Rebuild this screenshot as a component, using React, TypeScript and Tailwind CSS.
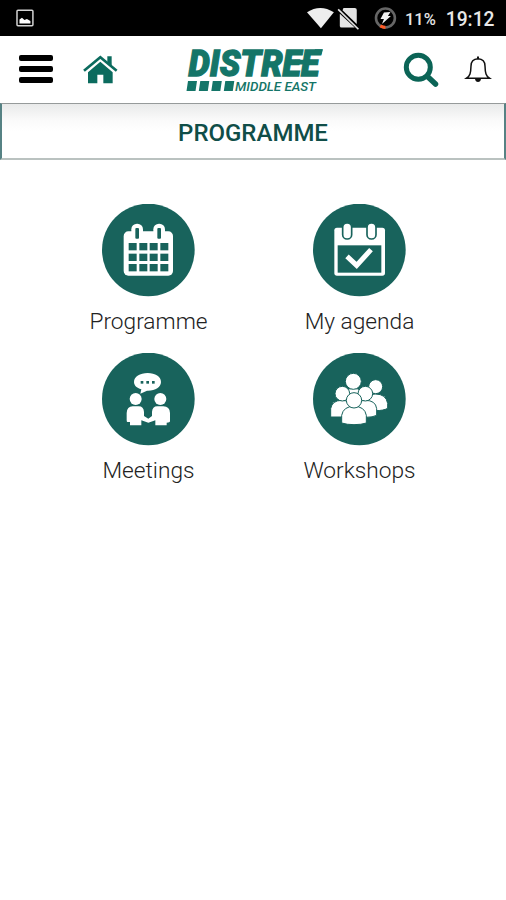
import React from "react";

const roboto = "font-[Roboto,'Liberation_Sans',sans-serif]";

function StatusBar() {
  return (
    <div className="flex h-9 items-center bg-black text-white">
      <svg className="ml-4 h-[18px] w-[18px]" viewBox="0 0 18 18">
        <rect x="1" y="1.3" width="16" height="15.4" rx="1" fill="none" stroke="#d4d4d4" strokeWidth="1.5" />
        <path d="M3.5 14.5V10.5L6 8.8L8.5 11L11 10L14.5 12V14.5Z" fill="#fff" />
      </svg>
      <svg className="ml-[273px] h-9 w-[54px]" viewBox="0 0 162 108">
        <path d="M0 37Q40 10 81 37L42 85Z" fill="#eee" />
        <path d="M110 24H144Q150 24 150 30V72L107 31Z" fill="#e4e4e4" />
        <path d="M99 41L144 83H104Q99 83 99 78Z" fill="#e4e4e4" />
        <path d="M94 28L155 88" stroke="#e4e4e4" strokeWidth="5" />
      </svg>
      <svg className="ml-[13px] h-[24px] w-[24px]" viewBox="0 0 24 24">
        <circle cx="11.5" cy="12" r="9.5" fill="none" stroke="#666" strokeWidth="2.6" />
        <path d="M11.5 21.5A9.5 9.5 0 0 1 6.4 20" fill="none" stroke="#ff5a26" strokeWidth="3.2" />
        <path d="M10 6.5L16.5 6L14 10H17L8 18L10 13H6.5Z" fill="#f2f2f2" />
      </svg>
      <svg className="h-9 w-[109px]" viewBox="0 0 109 36">
        <text x="7" y="25" textLength="31" lengthAdjust="spacingAndGlyphs" className={`${roboto} text-[17px] font-medium`} fill="#e6e6e6">11%</text>
        <text x="48" y="26" textLength="49" lengthAdjust="spacingAndGlyphs" className={`${roboto} text-[21px] font-medium`} fill="#e8e8e8">19:12</text>
      </svg>
    </div>
  );
}

function Logo() {
  return (
    <svg className="ml-[68px] h-[50px] w-[140px] overflow-visible" viewBox="0 0 140 50" fill="#147568">
      <text x="2.5" y="31" textLength="131" lengthAdjust="spacingAndGlyphs" className={`${roboto} text-[36.5px] font-black italic`} stroke="#147568" strokeWidth="1.3">DISTREE</text>
      <path d="M109 14.8H123L122 19.5H108Z" />
      <path d="M129 4.3H137L135.5 9.5H128Z" />
      <path d="M2 36H11L9.5 46H.5ZM14.3 36H23.3L21.8 46H12.8ZM26.8 36H35.8L34.3 46H25.3ZM39.3 36H48.3L46.8 46H37.8Z" />
      <text x="49" y="45.7" textLength="81" lengthAdjust="spacingAndGlyphs" className={`${roboto} text-[13.5px] font-medium italic`}>MIDDLE EAST</text>
    </svg>
  );
}

function Header() {
  return (
    <header className="flex h-[67px] items-center bg-white">
      <div className="mb-px ml-[19px] flex w-[34px] flex-col gap-[5.5px]">
        <span className="h-[5.6px] rounded-[2px] bg-black" />
        <span className="h-[5.6px] rounded-[2px] bg-black" />
        <span className="h-[5.6px] rounded-[2px] bg-black" />
      </div>
      <svg className="ml-[30px] h-[30px] w-[35px]" viewBox="249 164 105 90" fill="#0b6b5e">
        <path d="M264 216L301 184L338 216V249H310V223H292V249H264Z" />
        <path d="M322 168H335V198L322 186Z" />
        <path d="M252 211L301 171L350 211" fill="none" stroke="#0b6b5e" strokeWidth="8" />
      </svg>
      <Logo />
      <svg className="ml-[77px] h-[38px] w-[38px]" viewBox="0 0 38 38" fill="none" stroke="#0b6456">
        <circle cx="15.3" cy="16.3" r="12" strokeWidth="5" />
        <path d="M24.5 25.5L32.5 33" strokeWidth="5.5" strokeLinecap="round" />
      </svg>
      <svg className="mb-[2px] ml-[23px] h-[30px] w-[28px]" viewBox="0 0 28 30" fill="none" stroke="#111" strokeWidth="1.5">
        <path d="M2.5 24.2C6 22 6.8 19 7 12C7 7.5 9.5 5 14 4.7C18.5 5 21 7.5 21 12C21.2 19 22 22 25.5 24.2Z" />
        <path d="M14 2.5V5" strokeWidth="2" />
        <path d="M11 25H17Q16.5 28 14 28Q11.5 28 11 25Z" fill="#111" stroke="none" />
      </svg>
    </header>
  );
}

function CalendarIcon() {
  return (
    <svg className="size-[93px]" viewBox="66 27 279 279">
      <circle cx="205" cy="165" r="139" fill="#18635c" />
      <rect x="131" y="109" width="148" height="133" rx="14" fill="#fff" />
      <rect x="154" y="86" width="35" height="52" rx="17" fill="#fff" />
      <rect x="220" y="86" width="35" height="52" rx="17" fill="#fff" />
      <g fill="#18635c">
        <rect x="166" y="99" width="11" height="32" rx="3" />
        <rect x="232" y="99" width="11" height="32" rx="3" />
        {[144, 176, 207].map((y) =>
          [146, 178, 209, 241].map((x) => <rect key={`${x}-${y}`} x={x} y={y} width="24" height="22" />),
        )}
      </g>
    </svg>
  );
}

function AgendaIcon() {
  return (
    <svg className="size-[93px]" viewBox="69 27 279 279">
      <circle cx="208" cy="165" r="139" fill="#18635c" />
      <rect x="133" y="98" width="152" height="144" rx="8" fill="#fff" />
      <rect x="143" y="151" width="131" height="82" fill="#18635c" />
      <g fill="#fff" stroke="#18635c" strokeWidth="5">
        <rect x="158" y="84" width="27" height="48" rx="13" />
        <rect x="231" y="84" width="27" height="48" rx="13" />
      </g>
      <path d="M171 184L200 211L243 164" fill="none" stroke="#fff" strokeWidth="15" />
    </svg>
  );
}

function MeetingsIcon() {
  return (
    <svg className="size-[93px]" viewBox="66 24 279 279">
      <circle cx="205" cy="162" r="139" fill="#18635c" />
      <g fill="#fff">
        <path d="M203 84C226 84 243 95 243 111C243 127 225 138 201 137L181 146L184 133C170 129 162 121 162 111C162 95 180 84 203 84Z" />
        <circle cx="167" cy="162" r="18" />
        <circle cx="241" cy="162" r="18" />
        <path d="M158 184H176Q191 184 192 201V213L205 221L216 213V201Q217 184 232 184H250Q269 184 270 204V229Q270 233 260 233V241H226V226L205 233L184 226V241H150V231H142Q140 231 140 225V204Q141 184 158 184Z" />
      </g>
      <g fill="#18635c">
        <rect x="182" y="108" width="8" height="8" />
        <rect x="199" y="108" width="8" height="8" />
        <rect x="216" y="108" width="8" height="8" />
      </g>
    </svg>
  );
}

function WorkshopsIcon() {
  return (
    <svg className="size-[93px]" viewBox="69 24 279 279">
      <circle cx="208" cy="162" r="139" fill="#18635c" />
      <g fill="#fff" stroke="#18635c" strokeWidth="3">
        <path d="M156 179V156Q161 130 190 130Q219 130 225 156V179Z" />
        <circle cx="190" cy="109" r="24" />
        <path d="M221 197V173Q226 147 256 147Q288 147 293 175V190Q281 197 256 197Z" />
        <circle cx="257" cy="125" r="21" />
        <path d="M122 216V191Q126 166 156 166Q184 166 190 191V216Z" />
        <circle cx="157" cy="146" r="22" />
        <path d="M193 216V191Q198 166 226 166Q257 166 260 191V211Q249 217 226 217Z" />
        <circle cx="226" cy="146" r="22" />
        <path d="M155 234V211Q160 184 192 184Q224 184 229 211V234Q214 239 192 239Q171 239 155 234Z" />
        <circle cx="192" cy="166" r="23" />
      </g>
    </svg>
  );
}

function Tile({ label, children }: { label: string; children: React.ReactNode }) {
  return (
    <div className="flex h-[149px] flex-col items-center">
      {children}
      <span className="mt-[10px] text-[22.7px] leading-[30px] font-light whitespace-nowrap text-[#222]">{label}</span>
    </div>
  );
}

export default function App() {
  return (
    <div className={`h-[900px] w-[506px] overflow-hidden bg-white ${roboto}`}>
      <StatusBar />
      <Header />
      <div className="flex h-[57px] items-center justify-center border-x-2 border-t border-b-2 border-x-[#568284] border-t-[#969a9a] border-b-[#bac2c0] bg-linear-to-b from-[#e9eaea] via-[#fafafa] via-30% to-white to-50% pt-[4px]">
        <h1 className="text-[24px] leading-none font-medium text-[#104e48]">PROGRAMME</h1>
      </div>
      <main className="mt-[44px] ml-[43px] grid w-[422px] grid-cols-2">
        <Tile label="Programme"><CalendarIcon /></Tile>
        <Tile label="My agenda"><AgendaIcon /></Tile>
        <Tile label="Meetings"><MeetingsIcon /></Tile>
        <Tile label="Workshops"><WorkshopsIcon /></Tile>
      </main>
    </div>
  );
}
